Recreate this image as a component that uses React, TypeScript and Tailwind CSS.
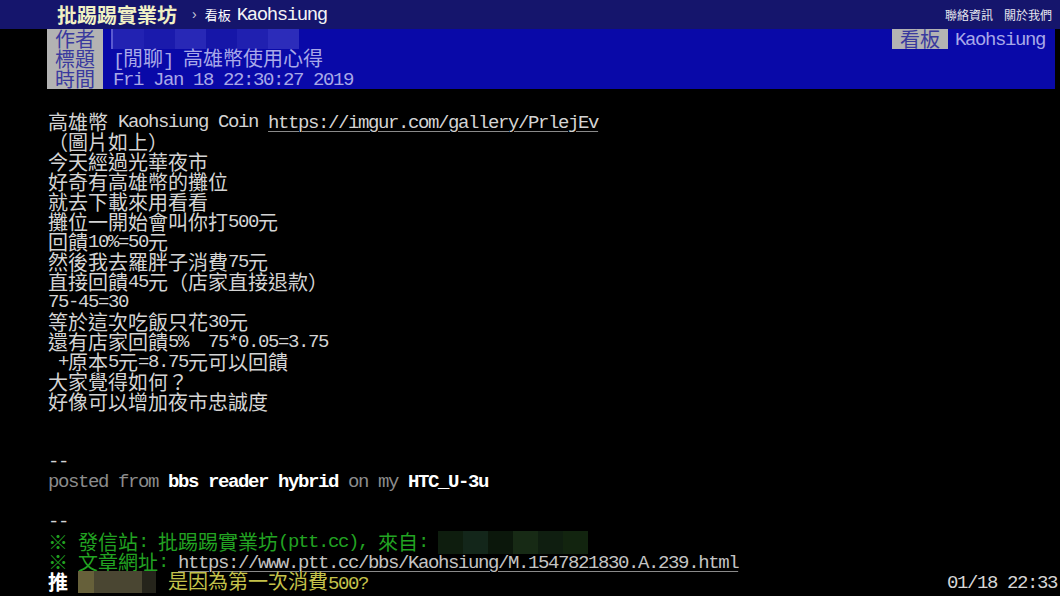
import React from "react";

// PTT 文章頁：半形 10px、全形 20px 的終端格子
const MONO = "font-['Liberation_Mono',monospace] text-[19px] tracking-[-1.4px] leading-[20px]";
const CJK = "font-['Noto_Sans_CJK_TC','Noto_Sans_CJK_SC',sans-serif] text-[20px] leading-[20px]";

function T({ s, className = "" }: { s: string; className?: string }) {
  const parts = s.split(/([\x20-\x7e]+)/).filter((p) => p !== "");
  return (
    <>
      {parts.map((p, i) => (
        <span key={i} className={`${/^[\x20-\x7e]+$/.test(p) ? MONO : CJK} ${className}`}>
          {p}
        </span>
      ))}
    </>
  );
}

function Line({ children, className = "" }: { children?: React.ReactNode; className?: string }) {
  return <div className={`flex h-[20px] items-center leading-[20px] whitespace-pre ${className}`}>{children}</div>;
}

const authorBlur = ["#2222b2", "#1a1aac", "#2828b6", "#1616a8", "#2020b0", "#2c2cba"];
const ipBlur = ["#0e1d0e", "#13261a", "#0b170b", "#172a15", "#0f1e10", "#12240f"];

const bodyLines = [
  "（圖片如上）",
  "今天經過光華夜市",
  "好奇有高雄幣的攤位",
  "就去下載來用看看",
  "攤位一開始會叫你打500元",
  "回饋10%=50元",
  "然後我去羅胖子消費75元",
  "直接回饋45元（店家直接退款）",
  "75-45=30",
  "等於這次吃飯只花30元",
  "還有店家回饋5%  75*0.05=3.75",
  " +原本5元=8.75元可以回饋",
  "大家覺得如何？",
  "好像可以增加夜市忠誠度",
];

export default function App() {
  return (
    <div className="w-[1060px] h-[596px] overflow-hidden bg-black text-[#d4d4d4]">
      {/* top bar */}
      <div className="flex h-[29px] items-center bg-[#15156c] pl-[57px] pr-[8px]">
        <span className="font-['Noto_Sans_CJK_TC',sans-serif] text-[20px] font-bold leading-[29px] text-[#f0f0c4]">批踢踢實業坊</span>
        <span className="ml-[15px] text-[14px] text-[#c8c8d8] font-['Liberation_Sans',sans-serif]">›</span>
        <span className="ml-[8px] text-[13px] text-white font-['Noto_Sans_CJK_TC',sans-serif]">看板</span>
        <span className={`${MONO} ml-[6px] text-[#f4f4f4]`}>Kaohsiung</span>
        <div className="ml-auto flex gap-[11px] text-[12px] text-[#e6e6ee] font-['Noto_Sans_CJK_TC',sans-serif]">
          <span>聯絡資訊</span>
          <span>關於我們</span>
        </div>
      </div>

      {/* article meta */}
      <div className="pl-[47px] pr-[5px]">
        <div className="bg-[#0909a8] text-[#a8a8e8]">
          <Line>
            <span className="flex h-full w-[56px] justify-center bg-[#b3b3b3] text-[#3a3a9e]"><T s="作者" /></span>
            <div className="ml-[8px] flex h-full border-l-2 border-[#5a5ad0]">
              {authorBlur.map((c, i) => (
                <div key={i} className="h-full w-[31px]" style={{ backgroundColor: c }} />
              ))}
            </div>
            <span className="ml-auto flex h-full w-[56px] justify-center bg-[#b3b3b3] text-[#3a3a9e]"><T s="看板" /></span>
            <span className="ml-[7px] mr-[10px]"><T s="Kaohsiung" /></span>
          </Line>
          <Line>
            <span className="flex h-full w-[56px] justify-center bg-[#b3b3b3] text-[#3a3a9e]"><T s="標題" /></span>
            <span className="ml-[10px]"><T s="[閒聊] 高雄幣使用心得" /></span>
          </Line>
          <Line>
            <span className="flex h-full w-[56px] justify-center bg-[#b3b3b3] text-[#3a3a9e]"><T s="時間" /></span>
            <span className="ml-[10px]"><T s="Fri Jan 18 22:30:27 2019" /></span>
          </Line>
        </div>
      </div>

      {/* body */}
      <div className="pl-[48px] pt-[23px]">
        <Line>
          <T s="高雄幣 Kaohsiung Coin " />
          <span className="underline decoration-1 underline-offset-[3px] decoration-[#8a8a8a]">
            <T s="https://imgur.com/gallery/PrlejEv" />
          </span>
        </Line>
        {bodyLines.map((l, i) => (
          <Line key={i}>
            <T s={l} />
          </Line>
        ))}
        <Line />
        <Line />
        <Line><T s="--" /></Line>
        <Line>
          <T s="posted from " className="text-[#8c8c8c]" />
          <T s="bbs reader hybrid" className="text-white font-bold" />
          <T s=" on my " className="text-[#8c8c8c]" />
          <T s="HTC_U-3u" className="text-white font-bold" />
        </Line>
        <Line />
        <Line><T s="--" /></Line>
        <Line className="text-[#22a322]">
          <T s="※ 發信站: 批踢踢實業坊(ptt.cc), 來自: " />
          <div className="flex h-[23px]">
            {ipBlur.map((c, i) => (
              <div key={i} className="h-full w-[25px]" style={{ backgroundColor: c }} />
            ))}
          </div>
        </Line>
        <Line>
          <T s="※ 文章網址: " className="text-[#22a322]" />
          <span className="underline decoration-1 underline-offset-[3px] decoration-[#8a8a8a] text-[#c4c4c4]">
            <T s="https://www.ptt.cc/bbs/Kaohsiung/M.1547821830.A.239.html" />
          </span>
        </Line>
        <Line className="pr-[3px]">
          <T s="推 " className="text-white font-bold" />
          <div className="flex h-[22px] w-[78px]">
            <div className="h-full w-[16px] bg-[#66603a]" />
            <div className="h-full w-[48px] bg-[#4a4632]" />
            <div className="h-full w-[14px] bg-[#25241b]" />
          </div>
          <span className="ml-[12px] text-[#c4c24a]"><T s="是因為第一次消費500?" /></span>
          <span className="ml-auto text-[#d6d6d6]"><T s="01/18 22:33" /></span>
        </Line>
      </div>
    </div>
  );
}
